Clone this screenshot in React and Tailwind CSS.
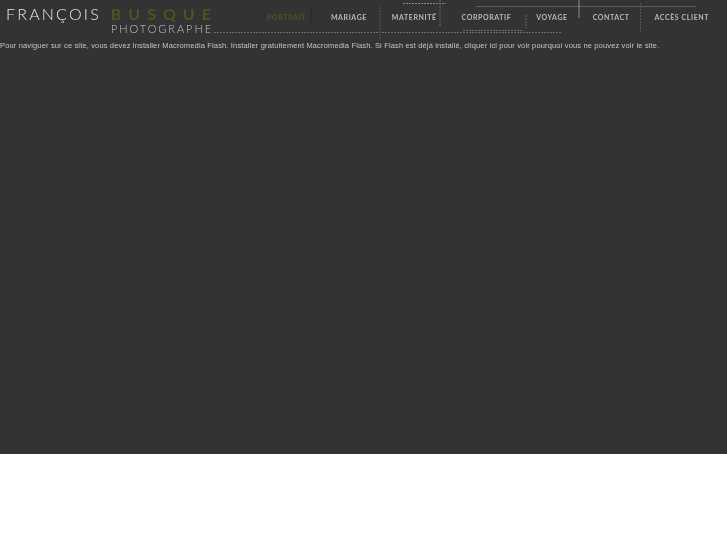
const navItems = ['Portrait', 'Mariage', 'Maternité', 'Corporatif', 'Voyage', 'Contact', 'Accès client']

// the thin rules scattered behind the menu
function HeaderLines() {
  return (
    <svg className="absolute left-0 top-0" width="727" height="45" fill="none">
      <path d="M214 32.5H562" stroke="#6e6e6e" strokeDasharray="2 1" />
      <path d="M463 30.5H522" stroke="#6e6e6e" strokeDasharray="2 1" />
      <path d="M403 3.5H446" stroke="#8a8a8a" strokeDasharray="2 1" />
      <path d="M476 6.5H696" stroke="#5e5e5e" />
      <path d="M579 0V18" stroke="#8f8f8f" />
      <path d="M440 0V27" stroke="#6a6a6a" strokeDasharray="2 1" />
      <path d="M380 7V39" stroke="#555" strokeDasharray="2 1" />
      <path d="M311 7V25" stroke="#262626" />
      <path d="M526 15V28" stroke="#6a6a6a" strokeDasharray="2 1" />
      <path d="M640.5 3V33" stroke="#555" strokeDasharray="2 1" />
    </svg>
  )
}

export default function App() {
  return (
    <div className="h-[454px] bg-[#333333] font-['Liberation_Sans',sans-serif]">
      <header className="relative flex h-[40px]">
        <HeaderLines />
        <div className="relative w-[267px] shrink-0 pl-[6px] font-['Lato',sans-serif] blur-[0.3px]">
          <div className="flex h-[24px] items-center gap-[9.8px] pt-[3px] text-[16px] leading-none">
            <span className="font-light tracking-[2.2px] text-[#e6e6e6]">FRANÇOIS</span>
            <span className="font-bold tracking-[7px] text-[#46591f]">BUSQUE</span>
          </div>
          <div className="pl-[105px] text-[11px] leading-[10px] font-light tracking-[1.95px] text-[#c4c4c4]">PHOTOGRAPHE</div>
        </div>
        <nav className="relative flex h-[35px] items-center gap-[24.9px] whitespace-nowrap font-['Lato',sans-serif] text-[7px] font-bold uppercase tracking-[0.6px] text-[#b8b8b8] blur-[0.3px]">
          {navItems.map((item, i) => (
            <a key={item} href="#" className={i === 0 ? 'text-[#46591f]' : ''}>
              {item}
            </a>
          ))}
        </nav>
      </header>
      <p className="whitespace-nowrap pt-px text-[7.5px] leading-[10px] tracking-[0.15px] text-[#c4c4c4] blur-[0.25px]">
        Pour naviguer sur ce site, vous devez installer Macromedia Flash. Installer gratuitement Macromedia Flash. Si Flash est déjà installé, cliquer ici pour voir pourquoi vous ne pouvez voir le site.
      </p>
    </div>
  )
}
